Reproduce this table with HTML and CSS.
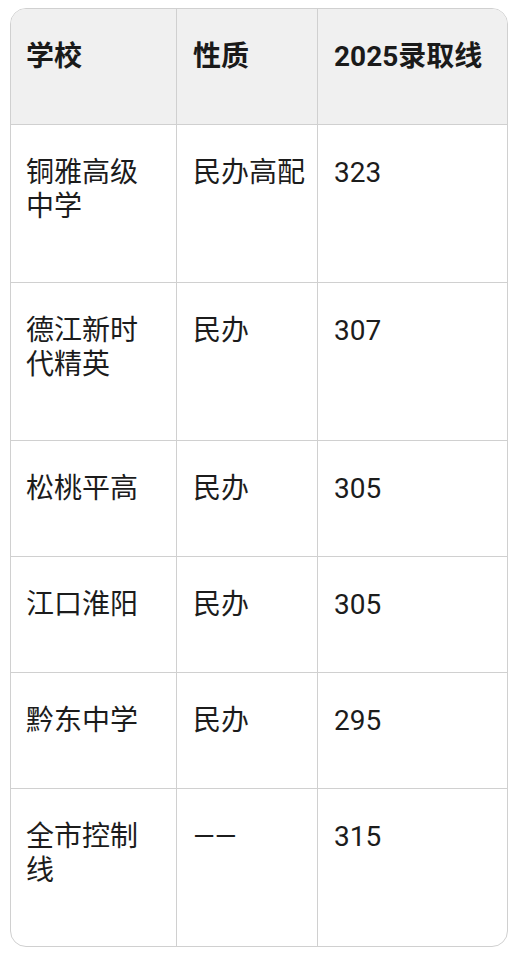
FILE: index.html
```html
<!DOCTYPE html>
<html lang="zh">
<head>
<meta charset="utf-8">
<link rel="stylesheet" href="styles.css">
</head>
<body>
<div class="card">
  <table class="score-table">
    <colgroup>
      <col class="c1"><col class="c2"><col class="c3">
    </colgroup>
    <thead>
      <tr class="row"><th>学校</th><th>性质</th><th>2025录取线</th></tr>
    </thead>
    <tbody>
      <tr class="row tall"><td>铜雅高级中学</td><td>民办高配</td><td>323</td></tr>
      <tr class="row tall"><td>德江新时代精英</td><td>民办</td><td>307</td></tr>
      <tr class="row"><td>松桃平高</td><td>民办</td><td>305</td></tr>
      <tr class="row"><td>江口淮阳</td><td>民办</td><td>305</td></tr>
      <tr class="row"><td>黔东中学</td><td>民办</td><td>295</td></tr>
      <tr class="row last"><td>全市控制线</td><td>——</td><td>315</td></tr>
    </tbody>
  </table>
</div>
</body>
</html>
```

FILE: styles.css
```css
html, body {
  margin: 0;
  padding: 0;
  background: #ffffff;
}

body {
  font-family: Roboto, "Noto Sans CJK SC", sans-serif;
  color: #1c1c1c;
}

.card {
  margin: 8px 0 0 10px;
  width: 498px;
  box-sizing: border-box;
  border: 1px solid #d0d0d0;
  border-radius: 16px;
  overflow: hidden;
}

.score-table {
  width: 496px;
  table-layout: fixed;
  border-collapse: separate;
  border-spacing: 0;
}

.c1 { width: 166px; }
.c2 { width: 141px; }
.c3 { width: 189px; }

.score-table th,
.score-table td {
  box-sizing: border-box;
  vertical-align: top;
  text-align: left;
  font-size: 28px;
  line-height: 34px;
  padding: 31px 8px 0 16px;
  border-right: 1px solid #d0d0d0;
  border-bottom: 1px solid #d0d0d0;
}

.score-table th {
  background: #f0f0f0;
  font-weight: 700;
  color: #1a1a1a;
}

.score-table th:first-child,
.score-table td:first-child {
  padding-left: 15px;
  padding-right: 16px;
}

.score-table th:last-child,
.score-table td:last-child {
  border-right: none;
}

.row { height: 116px; }
.tall { height: 158px; }
.last { height: 157px; }
.last td { border-bottom: none; }
```
